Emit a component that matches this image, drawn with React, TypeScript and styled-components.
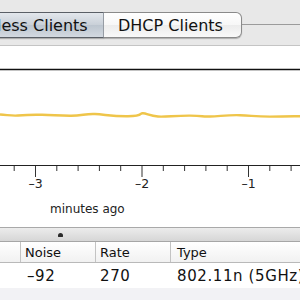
import React from "react";
import styled, { createGlobalStyle } from "styled-components";

const Global = createGlobalStyle`
    html, body {
        margin: 0;
        padding: 0;
    }
    body {
        width: 300px;
        height: 300px;
        overflow: hidden;
        background: #e9e9e9;
        font-family: "DejaVu Sans", "Liberation Sans", sans-serif;
    }
`;

const ticks = [-3, -2, -1, 0];

const App = () => {
    return (
        <Page>
            <Global />
            <TabBar>
                <Tab $selected>Wireless Clients</Tab>
                <Tab>DHCP Clients</Tab>
                <TabRule />
            </TabBar>
            <Chart>
                <svg width="300" height="181" viewBox="0 0 300 181">
                    <line x1="0" y1="23.5" x2="300" y2="23.5" stroke="#111" strokeWidth="1.5" />
                    <path
                        d="M0 68.5 C8 69 12 70 18 69.5 S30 68.5 42 68.8 S58 69.5 70 69.7 S85 67.5 95 68 S112 70.5 128 70.3 S139 67 143 67.3 S150 70 158 70.5 S175 69.5 190 69.6 S200 70.8 210 70.5 S228 68.8 240 69.2 S255 70.6 270 70.6 S290 70.4 300 70.2"
                        fill="none"
                        stroke="#efc54a"
                        strokeWidth="2.4"
                    />
                    <line x1="0" y1="119.5" x2="300" y2="119.5" stroke="#222" strokeWidth="1" />
                    {Array.from({ length: 15 }).map((_, i) => {
                        const x = 14.2 + i * 21.3;
                        const major = i % 5 === 1;
                        return (
                            <line
                                key={i}
                                x1={x}
                                y1="120"
                                x2={x}
                                y2={major ? 131 : 125}
                                stroke="#333"
                                strokeWidth="1"
                            />
                        );
                    })}
                    {ticks.map((t, i) => (
                        <text
                            key={t}
                            x={35.5 + i * 106.5}
                            y="142"
                            fontSize="12.5"
                            textAnchor="middle"
                            fill="#222"
                            fontFamily="DejaVu Sans, sans-serif"
                        >
                            {t === 0 ? "" : "\u2013" + Math.abs(t)}
                        </text>
                    ))}
                    <text
                        x="50"
                        y="167"
                        fontSize="12"
                        fill="#222"
                        fontFamily="DejaVu Sans, sans-serif"
                    >
                        minutes ago
                    </text>
                </svg>
            </Chart>
            <Splitter>
                <Grip />
            </Splitter>
            <Table>
                <Row $head>
                    <Cell $w={21} $head />
                    <Cell $w={75} $head>Noise</Cell>
                    <Cell $w={75} $head>Rate</Cell>
                    <Cell $w={140} $head $pad={6}>Type</Cell>
                </Row>
                <Row>
                    <Cell $w={21} />
                    <Cell $w={75} $pad={6}>–92</Cell>
                    <Cell $w={75}>270</Cell>
                    <Cell $w={140} $pad={6}>802.11n (5GHz)</Cell>
                </Row>
                <Row $striped />
            </Table>
        </Page>
    );
};

export default App;

const Page = styled.div`
    width: 300px;
    height: 300px;
    display: flex;
    flex-direction: column;
    overflow: hidden;
`;

const TabBar = styled.div`
    height: 46px;
    padding-top: 12px;
    box-sizing: border-box;
    display: flex;
    align-items: flex-start;
    border-bottom: 1px solid #c4c4c4;
    background: #e8e8e8;
`;

const Tab = styled.div<{ $selected?: boolean }>`
    flex: none;
    height: 26px;
    box-sizing: border-box;
    display: flex;
    align-items: center;
    font-size: 16px;
    color: #111;
    white-space: nowrap;
    border: 1px solid ${(p) => (p.$selected ? "#5a5f66" : "#8a8a8a")};
    box-shadow: 0 1px 1px rgba(0, 0, 0, 0.25);
    ${(p) =>
        p.$selected
            ? `
        margin-left: -46px;
        width: 150px;
        padding-left: 6px;
        border-right: 1px solid #9aa0a8;
        background: linear-gradient(#e3e7ec, #c9d0d8 50%, #bcc5cf 51%, #d3d9e0);
    `
            : `
        width: 138px;
        padding-left: 14px;
        border-left: none;
        border-radius: 0 6px 6px 0;
        background: linear-gradient(#ffffff, #f7f7f7 50%, #ececec 51%, #f9f9f9);
    `}
`;

const TabRule = styled.div`
    flex: 1;
    margin-top: 12px;
    border-top: 1px solid #9b9b9b;
`;

const Chart = styled.div`
    height: 181px;
    background: #fff;
    border-bottom: 1px solid #a9a9a9;
    svg {
        display: block;
    }
`;

const Splitter = styled.div`
    height: 13px;
    background: linear-gradient(#ececec, #d6d6d6);
    border-bottom: 1px solid #a6a6a6;
    display: flex;
    justify-content: flex-start;
    align-items: center;
    padding-left: 58px;
`;

const Grip = styled.div`
    width: 5px;
    height: 4px;
    border-radius: 3px 3px 1px 1px;
    background: #2b2b2b;
`;

const Table = styled.div`
    flex: 1;
    background: #fff;
    display: flex;
    flex-direction: column;
`;

const Row = styled.div<{ $head?: boolean; $striped?: boolean }>`
    display: flex;
    height: ${(p) => (p.$head ? "20px" : "25px")};
    flex: ${(p) => (p.$striped ? 1 : "none")};
    background: ${(p) =>
        p.$head
            ? "linear-gradient(#ffffff, #f1f1f1)"
            : p.$striped
            ? "#f2f2f5"
            : "#ffffff"};
    border-bottom: ${(p) => (p.$head ? "1px solid #b9b9b9" : "none")};
`;

const Cell = styled.div<{ $w: number; $head?: boolean; $pad?: number }>`
    flex: none;
    width: ${(p) => p.$w}px;
    box-sizing: border-box;
    padding-left: ${(p) => p.$pad ?? 4}px;
    display: flex;
    align-items: center;
    white-space: nowrap;
    font-size: ${(p) => (p.$head ? "13px" : "15px")};
    letter-spacing: ${(p) => (p.$head ? "0" : "0.6px")};
    color: #111;
    border-right: ${(p) => (p.$head ? "1px solid #c3c3c3" : "none")};
`;
